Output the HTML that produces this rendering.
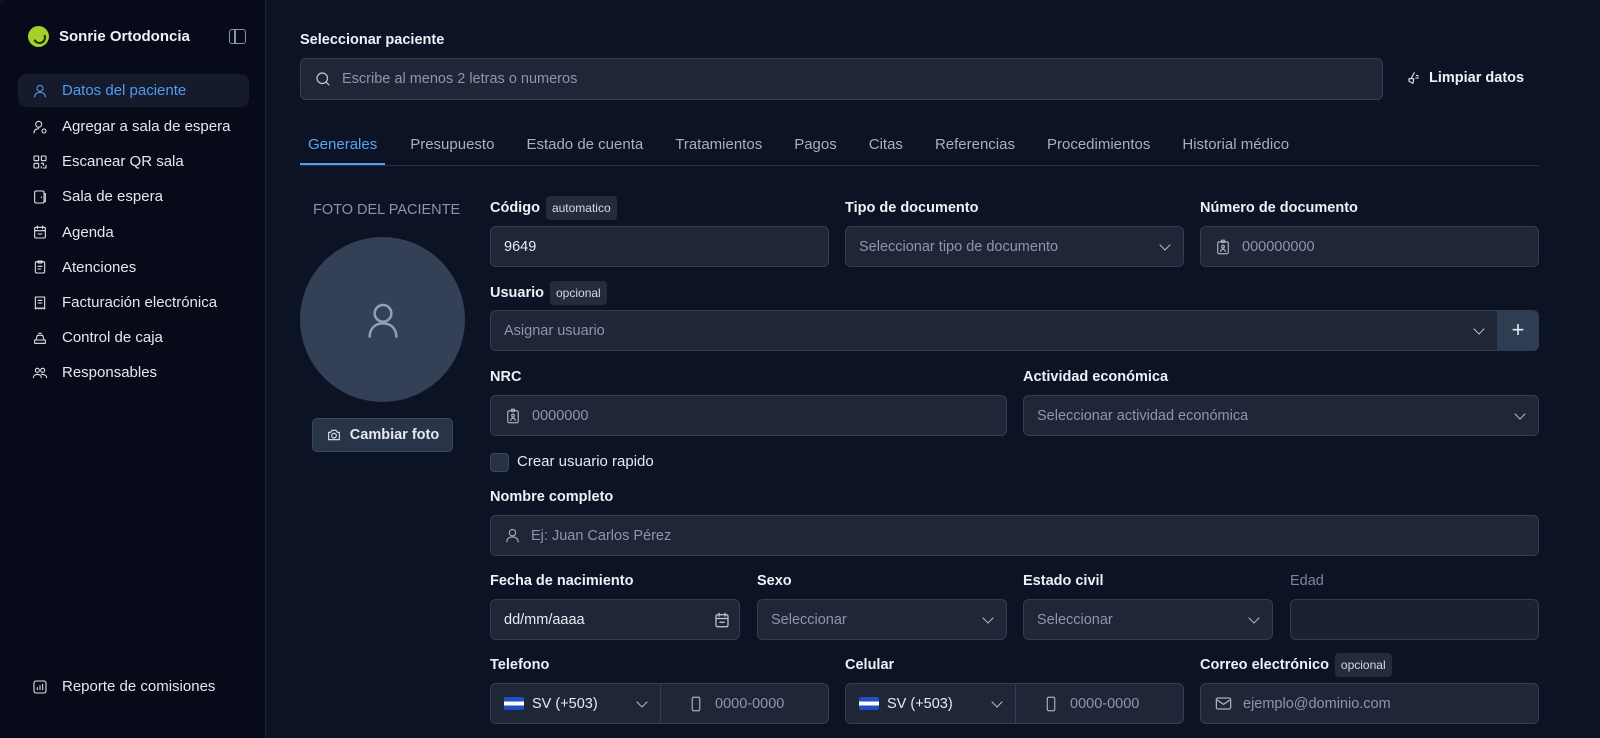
<!DOCTYPE html>
<html><head><meta charset="utf-8"><style>
*{box-sizing:border-box;margin:0;padding:0}
body{width:1600px;height:738px;overflow:hidden;background:#0c1324;font-family:"Liberation Sans",sans-serif;color:#e5e9f0;position:relative}
.sb{position:absolute;left:0;top:0;width:266px;height:738px;background:#060a19;border-right:1px solid #1d2435;border-top-left-radius:8px}
.brand{position:absolute;left:28px;top:26px;display:flex;align-items:center;gap:10px;font-size:15px;font-weight:bold;color:#f1f3f7}
.logo{width:21px;height:21px;border-radius:50%;background:#a3d12a;position:relative}
.logo:after{content:"";position:absolute;left:5px;top:5px;width:9px;height:9px;border:2px solid #1b2a06;border-top-color:transparent;border-left-color:transparent;border-radius:50%;transform:rotate(20deg)}
.tog{position:absolute;left:229px;top:29px;width:17px;height:15px;border:1.5px solid #8a93a6;border-radius:3px}
.tog:after{content:"";position:absolute;left:4px;top:0;width:1.5px;height:100%;background:#8a93a6}
.nav{position:absolute;left:18px;top:74px;width:231px}
.it{height:35.2px;display:flex;align-items:center;padding-left:14px;gap:14px;font-size:15px;color:#e3e7ee;border-radius:8px}
.it svg{width:16px;height:16px;flex:none}
.it.a{background:#151b2c;color:#4f9cf0;height:33px;margin-bottom:2px}
.rep{position:absolute;left:32px;top:678px;display:flex;gap:14px;align-items:center;font-size:15px;color:#e3e7ee}
.main{position:absolute;left:267px;top:0;right:0;bottom:0}
.lbl{position:absolute;font-size:14.5px;font-weight:bold;color:#eef1f6;display:flex;align-items:center;gap:6px}
.tag{font-size:12px;font-weight:normal;background:#232b3c;padding:5px 6px;border-radius:4px;color:#d4d9e3}
.in{position:absolute;height:41px;background:#1e2637;border:1px solid #343e51;border-radius:6px;display:flex;align-items:center;padding-left:13px;font-size:14.5px;color:#8c97ab;gap:10px}
.in.v{color:#e8ecf2}
.chev{position:absolute;right:14px;top:14px;width:8px;height:8px;border-right:1.6px solid #b9c0cc;border-bottom:1.6px solid #b9c0cc;transform:rotate(45deg)}
.tabs{position:absolute;left:300px;top:134px;width:1239px;height:32px;border-bottom:1px solid #283144;display:flex;font-size:15px;color:#a6b0c0}
.tabs div{padding:0 16px;line-height:22px}
.tabs .a{color:#5aa3f2;border-bottom:2px solid #4f9cf0;padding:0 8px;margin-right:9px}
svg{stroke:currentColor;fill:none;stroke-width:1.6;stroke-linecap:round;stroke-linejoin:round}
</style></head><body>
<div class="sb">
<div class="brand"><div class="logo"></div>Sonrie Ortodoncia</div>
<div class="tog"></div>
<div class="nav">
<div class="it a"><svg viewBox="0 0 24 24"><circle cx="12" cy="8" r="4.5"/><path d="M4 21c0-4.5 3.5-7 8-7s8 2.5 8 7"/></svg>Datos del paciente</div>
<div class="it"><svg viewBox="0 0 24 24"><circle cx="10" cy="8" r="4.5"/><path d="M3 21c0-4 3-6.5 7-6.5"/><circle cx="18" cy="18" r="3"/></svg>Agregar a sala de espera</div>
<div class="it"><svg viewBox="0 0 24 24"><rect x="3" y="3" width="7" height="7" rx="1"/><rect x="14" y="3" width="7" height="7" rx="1"/><rect x="3" y="14" width="7" height="7" rx="1"/><path d="M14 14h3v3M21 17v4h-4M14 21v-2"/></svg>Escanear QR sala</div>
<div class="it"><svg viewBox="0 0 24 24"><rect x="4" y="3" width="14" height="18" rx="2"/><path d="M18 7h2v12h-2M14 12v1"/></svg>Sala de espera</div>
<div class="it"><svg viewBox="0 0 24 24"><rect x="4" y="5" width="16" height="16" rx="2"/><path d="M8 3v4M16 3v4M4 10h16M9 15h6"/></svg>Agenda</div>
<div class="it"><svg viewBox="0 0 24 24"><rect x="5" y="4" width="14" height="17" rx="2"/><path d="M9 3h6v3H9zM9 11h6M9 15h4"/></svg>Atenciones</div>
<div class="it"><svg viewBox="0 0 24 24"><path d="M5 3h14v18l-3-2-2 2-2-2-2 2-2-2-3 2z"/><path d="M9 8h6M9 12h6"/></svg>Facturación electrónica</div>
<div class="it"><svg viewBox="0 0 24 24"><path d="M4 15h16v5H4zM6 15l2-7h8l2 7M10 5h4"/></svg>Control de caja</div>
<div class="it"><svg viewBox="0 0 24 24"><circle cx="8" cy="8" r="3"/><circle cx="16" cy="8" r="3"/><path d="M2 19c0-3 3-5 6-5s6 2 6 5M14 14c3 0 8 1 8 5"/></svg>Responsables</div>
</div>
<div class="rep"><svg viewBox="0 0 24 24" width="16" height="16"><rect x="3" y="3" width="18" height="18" rx="3"/><path d="M8 16v-3M12 16v-6M16 16v-8"/></svg>Reporte de comisiones</div>
</div>

<div class="lbl" style="left:300px;top:32px">Seleccionar paciente</div>
<div class="in" style="left:300px;top:58px;width:1083px;height:42px;gap:10px"><svg viewBox="0 0 24 24" width="18" height="18" style="color:#c4cad5"><circle cx="11" cy="11" r="7"/><path d="M20 20l-4-4"/></svg>Escribe al menos 2 letras o numeros</div>
<div class="lbl" style="left:1405px;top:70px;gap:8px"><svg viewBox="0 0 24 24" width="16" height="16"><path d="M14 4l-5 9M6 13h7l-1 7-6-3zM17 8l3 1M16 12h4"/></svg>Limpiar datos</div>

<div class="tabs"><div class="a">Generales</div><div>Presupuesto</div><div>Estado de cuenta</div><div>Tratamientos</div><div>Pagos</div><div>Citas</div><div>Referencias</div><div>Procedimientos</div><div>Historial médico</div></div>

<div style="position:absolute;left:313px;top:202px;font-size:14.5px;color:#8795ab">FOTO DEL PACIENTE</div>
<div style="position:absolute;left:300px;top:237px;width:165px;height:165px;border-radius:50%;background:#334056;display:flex;align-items:center;justify-content:center"><svg viewBox="0 0 24 24" width="40" height="40" style="color:#93a0b4;stroke-width:1.5"><circle cx="12" cy="8" r="5"/><path d="M4 22c0-5 3.5-8 8-8s8 3 8 8"/></svg></div>
<div style="position:absolute;left:312px;top:418px;width:141px;height:34px;background:#283448;border:1px solid #3a475c;border-radius:5px;display:flex;align-items:center;justify-content:center;gap:8px;font-size:14.5px;font-weight:bold"><svg viewBox="0 0 24 24" width="16" height="16"><path d="M4 8h3l2-3h6l2 3h3v11H4z"/><circle cx="12" cy="13" r="3.5"/></svg>Cambiar foto</div>

<div class="lbl" style="left:490px;top:196px">Código <span class="tag">automatico</span></div>
<div class="in v" style="left:490px;top:226px;width:339px">9649</div>
<div class="lbl" style="left:845px;top:200px">Tipo de documento</div>
<div class="in" style="left:845px;top:226px;width:339px">Seleccionar tipo de documento<span class="chev"></span></div>
<div class="lbl" style="left:1200px;top:200px">Número de documento</div>
<div class="in" style="left:1200px;top:226px;width:339px"><svg viewBox="0 0 24 24" width="18" height="18" style="color:#a5aebd"><rect x="5" y="5" width="14" height="16" rx="2"/><path d="M10 3h4v3h-4zM9 18c0-2 1.5-3 3-3s3 1 3 3"/><circle cx="12" cy="11.5" r="1.8"/></svg>000000000</div>

<div class="lbl" style="left:490px;top:281px">Usuario <span class="tag">opcional</span></div>
<div class="in" style="left:490px;top:310px;width:1008px;border-radius:6px 0 0 6px">Asignar usuario<span class="chev"></span></div>
<div style="position:absolute;left:1497px;top:310px;width:42px;height:41px;background:#2f3d52;border-radius:0 6px 6px 0;color:#e6eaf0;font-size:22px;text-align:center;line-height:39px">+</div>

<div class="lbl" style="left:490px;top:369px">NRC</div>
<div class="in" style="left:490px;top:395px;width:517px"><svg viewBox="0 0 24 24" width="18" height="18" style="color:#a5aebd"><rect x="5" y="5" width="14" height="16" rx="2"/><path d="M10 3h4v3h-4zM9 18c0-2 1.5-3 3-3s3 1 3 3"/><circle cx="12" cy="11.5" r="1.8"/></svg>0000000</div>
<div class="lbl" style="left:1023px;top:369px">Actividad económica</div>
<div class="in" style="left:1023px;top:395px;width:516px">Seleccionar actividad económica<span class="chev"></span></div>

<div style="position:absolute;left:490px;top:453px;width:19px;height:19px;background:#283245;border:1px solid #3a465a;border-radius:4px"></div>
<div style="position:absolute;left:517px;top:453px;font-size:15px;color:#e5e9f0">Crear usuario rapido</div>

<div class="lbl" style="left:490px;top:489px">Nombre completo</div>
<div class="in" style="left:490px;top:515px;width:1049px"><svg viewBox="0 0 24 24" width="17" height="17" style="color:#a5aebd"><circle cx="12" cy="8" r="4.5"/><path d="M4 21c0-4.5 3.5-7 8-7s8 2.5 8 7"/></svg>Ej: Juan Carlos Pérez</div>

<div class="lbl" style="left:490px;top:573px">Fecha de nacimiento</div>
<div class="in v" style="left:490px;top:599px;width:250px">dd/mm/aaaa<svg viewBox="0 0 24 24" width="18" height="18" style="position:absolute;right:8px;top:11px;color:#c4cad5"><rect x="4" y="5" width="16" height="16" rx="2"/><path d="M8 3v4M16 3v4M4 10h16M9 15h6"/></svg></div>
<div class="lbl" style="left:757px;top:573px">Sexo</div>
<div class="in" style="left:757px;top:599px;width:250px">Seleccionar<span class="chev"></span></div>
<div class="lbl" style="left:1023px;top:573px">Estado civil</div>
<div class="in" style="left:1023px;top:599px;width:250px">Seleccionar<span class="chev"></span></div>
<div class="lbl" style="left:1290px;top:573px;color:#7c879a;font-weight:normal">Edad</div>
<div class="in" style="left:1290px;top:599px;width:249px;background:#1a2232"></div>

<div class="lbl" style="left:490px;top:657px">Telefono</div>
<div class="in v" style="left:490px;top:683px;width:339px;padding:0">
<div style="width:170px;height:100%;border-right:1px solid #343e51;display:flex;align-items:center;gap:8px;padding-left:13px;position:relative"><span style="width:20px;height:13px;background:linear-gradient(#1f4fc0 33%,#fff 33%,#fff 66%,#1f4fc0 66%);border-radius:2px"></span>SV (+503)<span class="chev"></span></div>
<div style="display:flex;align-items:center;gap:10px;padding-left:16px;color:#8c97ab"><svg viewBox="0 0 24 24" width="18" height="18" style="color:#a5aebd"><rect x="7" y="3" width="10" height="18" rx="2"/></svg>0000-0000</div></div>
<div class="lbl" style="left:845px;top:657px">Celular</div>
<div class="in v" style="left:845px;top:683px;width:339px;padding:0">
<div style="width:170px;height:100%;border-right:1px solid #343e51;display:flex;align-items:center;gap:8px;padding-left:13px;position:relative"><span style="width:20px;height:13px;background:linear-gradient(#1f4fc0 33%,#fff 33%,#fff 66%,#1f4fc0 66%);border-radius:2px"></span>SV (+503)<span class="chev"></span></div>
<div style="display:flex;align-items:center;gap:10px;padding-left:16px;color:#8c97ab"><svg viewBox="0 0 24 24" width="18" height="18" style="color:#a5aebd"><rect x="7" y="3" width="10" height="18" rx="2"/></svg>0000-0000</div></div>
<div class="lbl" style="left:1200px;top:653px">Correo electrónico <span class="tag">opcional</span></div>
<div class="in" style="left:1200px;top:683px;width:339px"><svg viewBox="0 0 24 24" width="19" height="19" style="color:#a5aebd"><rect x="3" y="5" width="18" height="14" rx="2"/><path d="M3 7l9 6 9-6"/></svg>ejemplo@dominio.com</div>
</body></html>
